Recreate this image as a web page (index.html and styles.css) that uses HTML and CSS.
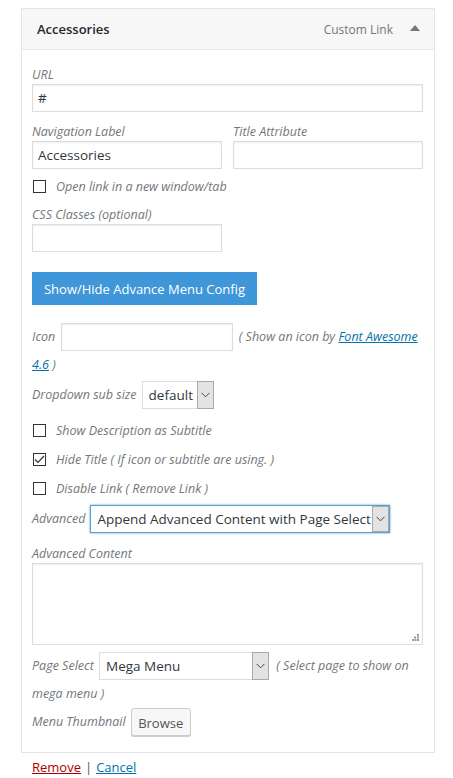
FILE: index.html
```html
<!DOCTYPE html>
<html>
<head>
<meta charset="utf-8">
<link rel="stylesheet" href="styles.css">
</head>
<body>
<div class="menu-item">
  <div class="item-bar">
    <span class="item-title">Accessories</span>
    <span class="item-controls">
      <span class="item-type">Custom Link</span>
      <svg class="item-arrow" width="10" height="6" viewBox="0 0 10 6"><path d="M0 6 L5 0 L10 6 Z" fill="#72777c"/></svg>
    </span>
  </div>
  <div class="item-settings">
    <div class="field">
      <div class="label">URL</div>
      <div class="input wide">#</div>
    </div>
    <div class="field-row">
      <div class="field half">
        <div class="label">Navigation Label</div>
        <div class="input">Accessories</div>
      </div>
      <div class="field half">
        <div class="label">Title Attribute</div>
        <div class="input"></div>
      </div>
    </div>
    <div class="check-row first">
      <span class="checkbox"></span>
      <span class="check-label">Open link in a new window/tab</span>
    </div>
    <div class="field">
      <div class="label">CSS Classes (optional)</div>
      <div class="input half-input"></div>
    </div>
    <div class="toggle-btn">Show/Hide Advance Menu Config</div>
    <div class="flow-row icon-row">
      <span class="label">Icon</span>
      <span class="input inline icon-input"></span>
      <span class="label">( Show an icon by <a class="link">Font Awesome 4.6</a> )</span>
    </div>
    <div class="inline-field sub-size">
      <span class="label">Dropdown sub size</span>
      <span class="select small-select"><span class="sel-text">default</span><span class="sel-arrow"><svg width="9" height="6" viewBox="0 0 9 6"><path d="M0.5 0.8 L4.5 4.8 L8.5 0.8" fill="none" stroke="#444" stroke-width="1"/></svg></span></span>
    </div>
    <div class="check-row cb-list">
      <span class="checkbox"></span>
      <span class="check-label">Show Description as Subtitle</span>
    </div>
    <div class="check-row cb-list">
      <span class="checkbox checked"><svg width="11" height="9" viewBox="0 0 11 9"><path d="M1 4.5 L4 7.5 L10 1" fill="none" stroke="#333" stroke-width="1.2"/></svg></span>
      <span class="check-label">Hide Title ( If icon or subtitle are using. )</span>
    </div>
    <div class="check-row cb-list">
      <span class="checkbox"></span>
      <span class="check-label">Disable Link ( Remove Link )</span>
    </div>
    <div class="inline-field advanced">
      <span class="label">Advanced</span>
      <span class="select focus adv-select"><span class="sel-text">Append Advanced Content with Page Select</span><span class="sel-arrow"><svg width="9" height="6" viewBox="0 0 9 6"><path d="M0.5 0.8 L4.5 4.8 L8.5 0.8" fill="none" stroke="#444" stroke-width="1"/></svg></span></span>
    </div>
    <div class="field adv-content">
      <div class="label">Advanced Content</div>
      <div class="textarea">
        <svg class="grip" width="7" height="7" viewBox="0 0 7 7"><g fill="#999"><rect x="5" y="0" width="2" height="2"/><rect x="2" y="2.5" width="2" height="2"/><rect x="5" y="2.5" width="2" height="2"/><rect x="0" y="5" width="2" height="2"/><rect x="2.5" y="5" width="2" height="2"/><rect x="5" y="5" width="2" height="2"/></g></svg>
      </div>
    </div>
    <div class="flow-row page-row">
      <span class="label">Page Select</span>
      <span class="select inline page-select"><span class="sel-text">Mega Menu</span><span class="sel-arrow"><svg width="9" height="6" viewBox="0 0 9 6"><path d="M0.5 0.8 L4.5 4.8 L8.5 0.8" fill="none" stroke="#444" stroke-width="1"/></svg></span></span>
      <span class="label">( Select page to show on mega menu )</span>
    </div>
    <div class="inline-field thumb">
      <span class="label">Menu Thumbnail</span>
      <span class="browse-btn">Browse</span>
    </div>
  </div>
</div>
<div class="actions">
  <a class="remove">Remove</a><span class="sep">|</span><a class="cancel">Cancel</a>
</div>
</body>
</html>
```

FILE: styles.css
```css
* { box-sizing: border-box; }
body {
  margin: 0;
  padding: 8px 19px 0 21px;
  background: #fff;
  font-family: "Open Sans", "Noto Sans", sans-serif;
  font-size: 12.5px;
  color: #444;
}
.menu-item {
  border: 1px solid #e5e5e5;
  width: 414px;
}
.item-bar {
  height: 41px;
  background: #f7f7f7;
  border-bottom: 1px solid #e5e5e5;
  display: flex;
  align-items: center;
  justify-content: space-between;
  padding: 0 14px 0 15px;
}
.item-title {
  font-size: 13px;
  font-weight: 600;
  color: #23282d;
}
.item-controls {
  display: flex;
  align-items: center;
  gap: 17px;
}
.item-type {
  color: #72777c;
  font-size: 12px;
}
.item-arrow { margin-top: -3px; }
.item-settings {
  padding: 16px 11px 16px 10px;
}
.label {
  font-style: italic;
  color: #72777c;
  line-height: 18px;
}
.input, .textarea {
  height: 28px;
  border: 1px solid #ddd;
  box-shadow: inset 0 1px 2px rgba(0,0,0,0.07);
  background: #fff;
  color: #32373c;
  font-size: 13.5px;
  line-height: 26px;
  padding: 0 5px;
}
.field-row {
  display: flex;
  gap: 11px;
  margin-top: 11px;
}
.half { width: 190px; }
.half-input { width: 190px; }
.check-row {
  display: flex;
  align-items: center;
  height: 18px;
}
.check-row.first { margin-top: 8px; }
.checkbox {
  width: 13px;
  height: 13px;
  border: 1px solid #333;
  margin: 0 10px 0 1px;
  display: flex;
  align-items: center;
  justify-content: center;
  flex: none;
}
.checkbox svg { display: block; }
.check-label {
  font-style: italic;
  color: #72777c;
}
.check-row + .field { margin-top: 11px; }
.toggle-btn {
  margin-top: 20px;
  width: 225px;
  height: 33px;
  background: #3f96d8;
  color: #fff;
  font-size: 13px;
  display: flex;
  align-items: center;
  justify-content: center;
}
.flow-row {
  line-height: 28px;
}
.flow-row .label { line-height: 28px; }
.icon-row { margin-top: 18px; }
.inline { display: inline-block; vertical-align: top; }
.icon-input { width: 172px; margin: 0 3px 0 2px; }
.link { color: #0073aa; text-decoration: underline; }
.inline-field {
  display: flex;
  align-items: center;
  gap: 5px;
}
.sub-size { margin-top: 2px; }
.select {
  height: 28px;
  border: 1px solid #ddd;
  background: #fff;
  display: inline-flex;
  align-items: stretch;
  color: #32373c;
  font-size: 13.5px;
}
.sel-text {
  flex: 1;
  padding: 0 6px;
  line-height: 26px;
  white-space: nowrap;
  overflow: hidden;
}
.sel-arrow {
  width: 17px;
  background: #e3e3e3;
  border: 1px solid #a9a9a9;
  margin: -1px -1px -1px 0;
  display: flex;
  align-items: center;
  justify-content: center;
  flex: none;
}
.small-select { width: 72px; }
.cb-list { margin-top: 11px; height: 18px; }
.sub-size + .cb-list { margin-top: 12px; }
.advanced { margin-top: 8px; }
.adv-select { width: 300px; }
.select.focus {
  border-color: #5b9dd9;
  box-shadow: 0 0 2px rgba(30,140,190,0.8);
}
.select.focus .sel-arrow { margin: 0; }
.adv-content { margin-top: 12px; }
.textarea {
  height: 82px;
  position: relative;
}
.grip { position: absolute; right: 3px; bottom: 3px; }
.page-row { margin-top: 7px; }
.page-select { width: 170px; margin: 0 4px 0 2px; }
.thumb { margin-top: 0; }
.browse-btn {
  width: 60px;
  height: 28px;
  border: 1px solid #ccc;
  border-radius: 3px;
  background: #f7f7f7;
  box-shadow: 0 1px 0 #ccc;
  color: #555;
  font-size: 13px;
  display: flex;
  align-items: center;
  justify-content: center;
  padding-top: 2px;
}
.actions {
  padding: 5px 0 0 11px;
  font-size: 13px;
  line-height: 18px;
  color: #444;
}
.sep { margin: 0 4px; color: #555; }
.remove { color: #a00; text-decoration: underline; }
.cancel { color: #0073aa; text-decoration: underline; }
```
